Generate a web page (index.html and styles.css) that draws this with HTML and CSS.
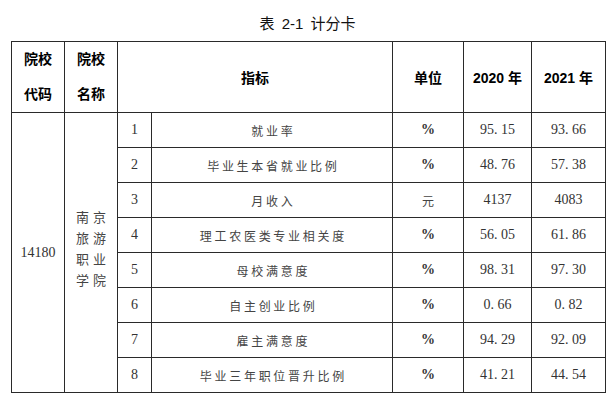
FILE: index.html
```html
<!DOCTYPE html>
<html lang="zh-CN">
<head>
<meta charset="utf-8">
<title>表 2-1 计分卡</title>
<link rel="stylesheet" href="styles.css">
</head>
<body>
<div class="page">
  <div class="title">表 2-1 计分卡</div>
  <table class="score">
    <colgroup>
      <col class="c-code"><col class="c-name"><col class="c-no"><col class="c-item"><col class="c-unit"><col class="c-y1"><col class="c-y2">
    </colgroup>
    <thead>
      <tr class="head">
        <th><span class="two">院校<br>代码</span></th>
        <th><span class="two">院校<br>名称</span></th>
        <th colspan="2">指标</th>
        <th>单位</th>
        <th>2020 年</th>
        <th>2021 年</th>
      </tr>
    </thead>
    <tbody>
      <tr>
        <td rowspan="8" class="num">14180</td>
        <td rowspan="8" class="school">南京<br>旅游<br>职业<br>学院</td>
        <td class="num">1</td>
        <td class="zh">就业率</td>
        <td class="pct">%</td>
        <td class="num">95<span class="dot">.</span>15</td>
        <td class="num">93<span class="dot">.</span>66</td>
      </tr>
      <tr>
        <td class="num">2</td>
        <td class="zh">毕业生本省就业比例</td>
        <td class="pct">%</td>
        <td class="num">48<span class="dot">.</span>76</td>
        <td class="num">57<span class="dot">.</span>38</td>
      </tr>
      <tr>
        <td class="num">3</td>
        <td class="zh">月收入</td>
        <td class="zh">元</td>
        <td class="num">4137</td>
        <td class="num">4083</td>
      </tr>
      <tr>
        <td class="num">4</td>
        <td class="zh">理工农医类专业相关度</td>
        <td class="pct">%</td>
        <td class="num">56<span class="dot">.</span>05</td>
        <td class="num">61<span class="dot">.</span>86</td>
      </tr>
      <tr>
        <td class="num">5</td>
        <td class="zh">母校满意度</td>
        <td class="pct">%</td>
        <td class="num">98<span class="dot">.</span>31</td>
        <td class="num">97<span class="dot">.</span>30</td>
      </tr>
      <tr>
        <td class="num">6</td>
        <td class="zh">自主创业比例</td>
        <td class="pct">%</td>
        <td class="num">0<span class="dot">.</span>66</td>
        <td class="num">0<span class="dot">.</span>82</td>
      </tr>
      <tr>
        <td class="num">7</td>
        <td class="zh">雇主满意度</td>
        <td class="pct">%</td>
        <td class="num">94<span class="dot">.</span>29</td>
        <td class="num">92<span class="dot">.</span>09</td>
      </tr>
      <tr>
        <td class="num">8</td>
        <td class="zh">毕业三年职位晋升比例</td>
        <td class="pct">%</td>
        <td class="num">41<span class="dot">.</span>21</td>
        <td class="num">44<span class="dot">.</span>54</td>
      </tr>
    </tbody>
  </table>
</div>
</body>
</html>
```

FILE: styles.css
```css
html, body {
  margin: 0;
  padding: 0;
  background: #fff;
}

.page {
  padding: 0 11px;
  font-family: "Noto Sans CJK SC", "Liberation Sans", sans-serif;
}

.title {
  height: 41px;
  padding-top: 14px;
  box-sizing: border-box;
  line-height: 20px;
  font-family: "Liberation Sans", "Noto Sans CJK SC", sans-serif;
  font-size: 15px;
  word-spacing: 3px;
  color: #111;
  text-align: center;
  width: 593px;
}

.score {
  border-collapse: collapse;
  table-layout: fixed;
  width: 594px;
}

.c-code { width: 53px; }
.c-name { width: 53px; }
.c-no { width: 34px; }
.c-item { width: 241px; }
.c-unit { width: 71px; }
.c-y1 { width: 68px; }
.c-y2 { width: 74px; }

.score th,
.score td {
  border: 1px solid #2a2a2a;
  padding: 0;
  text-align: center;
  vertical-align: middle;
}

.head {
  height: 69px;
}

.score th {
  font-family: "Liberation Sans", "Noto Sans CJK SC", sans-serif;
  font-weight: bold;
  font-size: 14px;
  color: #000;
}

.two {
  display: inline-block;
  line-height: 35px;
}

.score tbody tr {
  height: 35px;
}

.num {
  font-family: "Liberation Serif", "Noto Sans CJK SC", serif;
  font-size: 14px;
  color: #333;
}

.dot {
  display: inline-block;
  width: 7px;
  text-align: left;
}

.pct {
  font-family: "Liberation Serif", serif;
  font-size: 14px;
  font-weight: bold;
  color: #333;
}

.zh {
  font-family: "Noto Sans CJK SC", sans-serif;
  font-size: 12px;
  letter-spacing: 2.7px;
  padding-left: 2.7px !important;
  color: #444;
}

.school {
  font-family: "Noto Sans CJK SC", sans-serif;
  font-size: 13px;
  line-height: 21px;
  letter-spacing: 4px;
  padding-left: 4px !important;
  padding-bottom: 10px !important;
  color: #444;
}
```
